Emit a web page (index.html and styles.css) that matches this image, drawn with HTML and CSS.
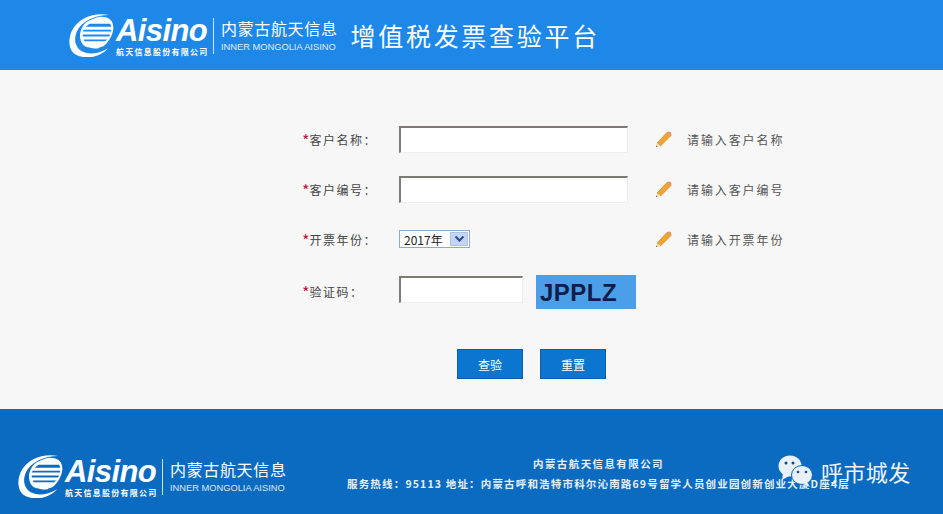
FILE: index.html
```html
<!DOCTYPE html>
<html lang="zh-CN">
<head>
    <meta charset="UTF-8">
    <meta name="viewport" content="width=device-width, initial-scale=1.0">
    <title>增值税发票查验平台</title>
    <link rel="stylesheet" href="styles.css">
</head>
<body>

<svg class="defs" width="0" height="0">
    <symbol id="logoMark" viewBox="0 0 46 44">
        <path fill="#fff" d="M41 1C27-2 10 3 3 17c-5 11-3 23 7 26 9 3 22 1 30-8-8 5-19 7-25 4C7 36 4 27 8 18 13 7 27 1 41 1z"/>
        <path fill="#fff" d="M30 3c8-1 14 2 15 8 1 4 0 9-3 14-2 3-4 6-7 8-1 0-2 1-3 1H20c-3 0-7-3-8-7-2-6 0-13 5-18 4-3 9-5 13-6zM21 10l-4 3h26v-1l-1-2zM15 16l-1 2h29v-2zM14 21v2h27l1-2zM15 26l1 2h21l2-2z"/>
        <path fill="none" stroke="#fff" stroke-width="1.500" d="M31 34c-5 1-10 0-12-2"/>
    </symbol>
    <symbol id="pencil" viewBox="0 0 17 17">
        <path fill="#f0a431" stroke="#c67a1c" stroke-width=".6" d="M12.500 1 16 4.500 5.500 15 2 12z"/>
        <path fill="#e88a7a" d="M12.500 1 14 .6c1 0 2.400 1.400 2.400 2.400L16 4.500z"/>
        <path fill="#f7dcb0" d="M2 12 1 16l4.500-1z"/>
        <path fill="#6b4a2a" d="M1.400 14.500 1 16l1.500-.4z"/>
    </symbol>
</svg>

<div class="header">
    <div class="logo">
        <svg class="logo-mark"><use href="#logoMark"/></svg>
        <div class="logo-name">
            <span class="logo-en">Aisino</span>
            <span class="logo-sub">航天信息股份有限公司</span>
        </div>
        <div class="logo-branch">
            <span class="logo-cn">内蒙古航天信息</span>
            <span class="logo-inner">INNER MONGOLIA AISINO</span>
        </div>
    </div>
    <h1>增值税发票查验平台</h1>
</div>

<div class="main">
    <form class="query-form">
        <label class="field-label"><i>*</i>客户名称：</label>
        <div><input type="text" class="text-input"></div>
        <svg class="pencil"><use href="#pencil"/></svg>
        <span class="hint">请输入客户名称</span>

        <label class="field-label"><i>*</i>客户编号：</label>
        <div><input type="text" class="text-input"></div>
        <svg class="pencil"><use href="#pencil"/></svg>
        <span class="hint">请输入客户编号</span>

        <label class="field-label"><i>*</i>开票年份：</label>
        <div class="year-select">
            <span>2017年</span>
            <span class="year-arrow">
                <svg width="11" height="8" viewBox="0 0 11 8"><path fill="none" stroke="#2b4c8c" stroke-width="2" d="M1.500 1.500 5.500 5.500 9.500 1.500"/></svg>
            </span>
        </div>
        <svg class="pencil"><use href="#pencil"/></svg>
        <span class="hint">请输入开票年份</span>

        <label class="field-label label-code"><i>*</i>验证码：</label>
        <div class="code-cell">
            <input type="text" class="text-input code-input">
            <div class="captcha">JPPLZ</div>
        </div>
    </form>
    <div class="actions">
        <button type="button" class="btn">查验</button>
        <button type="button" class="btn">重置</button>
    </div>
</div>

<div class="footer">
    <div class="logo">
        <svg class="logo-mark"><use href="#logoMark"/></svg>
        <div class="logo-name">
            <span class="logo-en">Aisino</span>
            <span class="logo-sub">航天信息股份有限公司</span>
        </div>
        <div class="logo-branch">
            <span class="logo-cn">内蒙古航天信息</span>
            <span class="logo-inner">INNER MONGOLIA AISINO</span>
        </div>
    </div>
    <div class="footer-info">
        <p>内蒙古航天信息有限公司</p>
        <p class="footer-address">服务热线：95113 地址：内蒙古呼和浩特市科尔沁南路69号留学人员创业园创新创业大厦D座4层</p>
    </div>
    <!-- watermark sits over the address line -->
    <div class="watermark">
        <svg width="38" height="36" viewBox="0 0 38 36">
            <ellipse cx="12" cy="13" rx="11.500" ry="10.500" fill="#e8f1fa"/>
            <path fill="#e8f1fa" d="M5 20 4 27l7-4z"/>
            <ellipse cx="24" cy="22" rx="10.500" ry="9.500" fill="#e8f1fa" stroke="#0a6bc1"/>
            <path fill="#e8f1fa" d="M29 29l3 5-7-3z"/>
            <circle cx="8" cy="10" r="1.500" fill="#0a4f8c"/>
            <circle cx="15" cy="10" r="1.500" fill="#0a4f8c"/>
            <circle cx="20" cy="19" r="1.300" fill="#0a4f8c"/>
            <circle cx="28" cy="19" r="1.300" fill="#0a4f8c"/>
        </svg>
        <span>呼市城发</span>
    </div>
</div>

</body>
</html>
```

FILE: styles.css
```css
* {
    box-sizing: border-box;
}
body {
    margin: 0;
    height: 514px;
    overflow: hidden;
    font-family: "Noto Sans CJK SC", "Liberation Sans", sans-serif;
    background-color: #f7f7f7;
}
.defs {
    position: absolute;
}
.header {
    height: 70px;
    padding: 14px 0 0 68px;
    display: flex;
    background-color: #1e88e8;
    color: white;
}
h1 {
    margin: -1px 0 0 13px;
    font-size: 25px;
    font-weight: normal;
    letter-spacing: 2.700px;
    line-height: 44px;
}

/* logo, used in both bars */
.logo {
    display: flex;
    align-items: center;
    height: 43px;
    color: white;
}
.logo-mark {
    width: 47px;
    height: 43px;
}
.logo-name {
    display: flex;
    flex-direction: column;
    margin-left: 1px;
    width: 93px;
}
.logo-en {
    font-family: "Liberation Sans", sans-serif;
    font-size: 31px;
    font-weight: bold;
    font-style: italic;
    line-height: 30px;
    letter-spacing: -.6px;
}
.logo-sub {
    font-size: 8px;
    font-weight: bold;
    line-height: 9px;
    white-space: nowrap;
    margin-top: 1px;
    letter-spacing: 1.250px;
}
.logo-branch {
    display: flex;
    flex-direction: column;
    height: 36px;
    margin-left: 4px;
    padding-left: 7px;
    border-left: 1px solid rgba(255, 255, 255, .8);
    white-space: nowrap;
}
.logo-cn {
    font-size: 16px;
    line-height: 21px;
    letter-spacing: .65px;
}
.logo-inner {
    font-family: "Liberation Sans", sans-serif;
    font-size: 9.300px;
    line-height: 13px;
    margin-top: 2px;
    opacity: .85;
}

/* form */
.main {
    height: 339px;
    padding: 44px 0 0 302px;
}
.query-form {
    display: grid;
    grid-template-columns: 97px 256px 32px auto;
    grid-auto-rows: 50px;
    align-items: center;
}
.field-label {
    font-size: 12px;
    color: #444;
    letter-spacing: 1.500px;
}
.field-label i {
    color: #c4123f;
    font-size: 16px;
    line-height: 0;
    font-style: normal;
    letter-spacing: 0;
    vertical-align: -2px;
}
.label-code {
    padding-top: 5px;
}
.text-input {
    display: block;
    width: 229px;
    height: 27px;
    background: white;
    border: 1px solid #eeeeee;
    border-top: 2px solid #7e7c72;
    border-left: 2px solid #7e7c72;
}
.pencil {
    width: 17px;
    height: 17px;
}
.hint {
    font-size: 12px;
    color: #555;
    letter-spacing: 1.900px;
}
.year-select {
    display: flex;
    align-items: center;
    justify-content: space-between;
    width: 71px;
    height: 18px;
    padding: 0 1px 0 4px;
    background: white;
    border: 1px solid #8fa8cc;
    font-size: 12px;
    color: #222;
}
.year-arrow {
    display: flex;
    align-items: center;
    justify-content: center;
    width: 18px;
    height: 14px;
    background-color: #c3d5f0;
    border: 1px solid #aec3e2;
}
.code-cell {
    display: flex;
    align-items: center;
}
.code-input {
    width: 124px;
}
.captcha {
    width: 100px;
    height: 34px;
    margin: 5px 0 0 13px;
    padding-left: 4px;
    background-color: #4b9ee8;
    color: #0f1d4a;
    font-family: "Liberation Sans", sans-serif;
    font-size: 24px;
    font-weight: bold;
    line-height: 35px;
    letter-spacing: .5px;
}
.actions {
    display: flex;
    gap: 17px;
    margin: 35px 0 0 155px;
}
.btn {
    width: 66px;
    height: 30px;
    padding: 0;
    border: 1px solid #0b5da8;
    background-color: #0a76cf;
    color: white;
    font-family: inherit;
    font-size: 12px;
}

/* footer */
.footer {
    position: relative;
    height: 105px;
    padding: 46px 0 0 17px;
    display: flex;
    background-color: #0a6bc1;
    color: white;
}
.footer-info {
    position: absolute;
    left: 347px;
    top: 45px;
    width: 503px;
    font-size: 10.500px;
    font-weight: bold;
    color: #e6f0fa;
    text-align: center;
    white-space: nowrap;
}
.footer-info p {
    margin: 0;
    line-height: 19px;
    letter-spacing: 1.400px;
}
.footer-info .footer-address {
    margin-top: 1px;
    letter-spacing: 1.170px;
}
.watermark {
    position: absolute;
    left: 778px;
    top: 44px;
    display: flex;
    align-items: flex-start;
    gap: 5px;
    font-size: 22px;
    line-height: 36px;
    color: #eef4fb;
    letter-spacing: .4px;
}
```
